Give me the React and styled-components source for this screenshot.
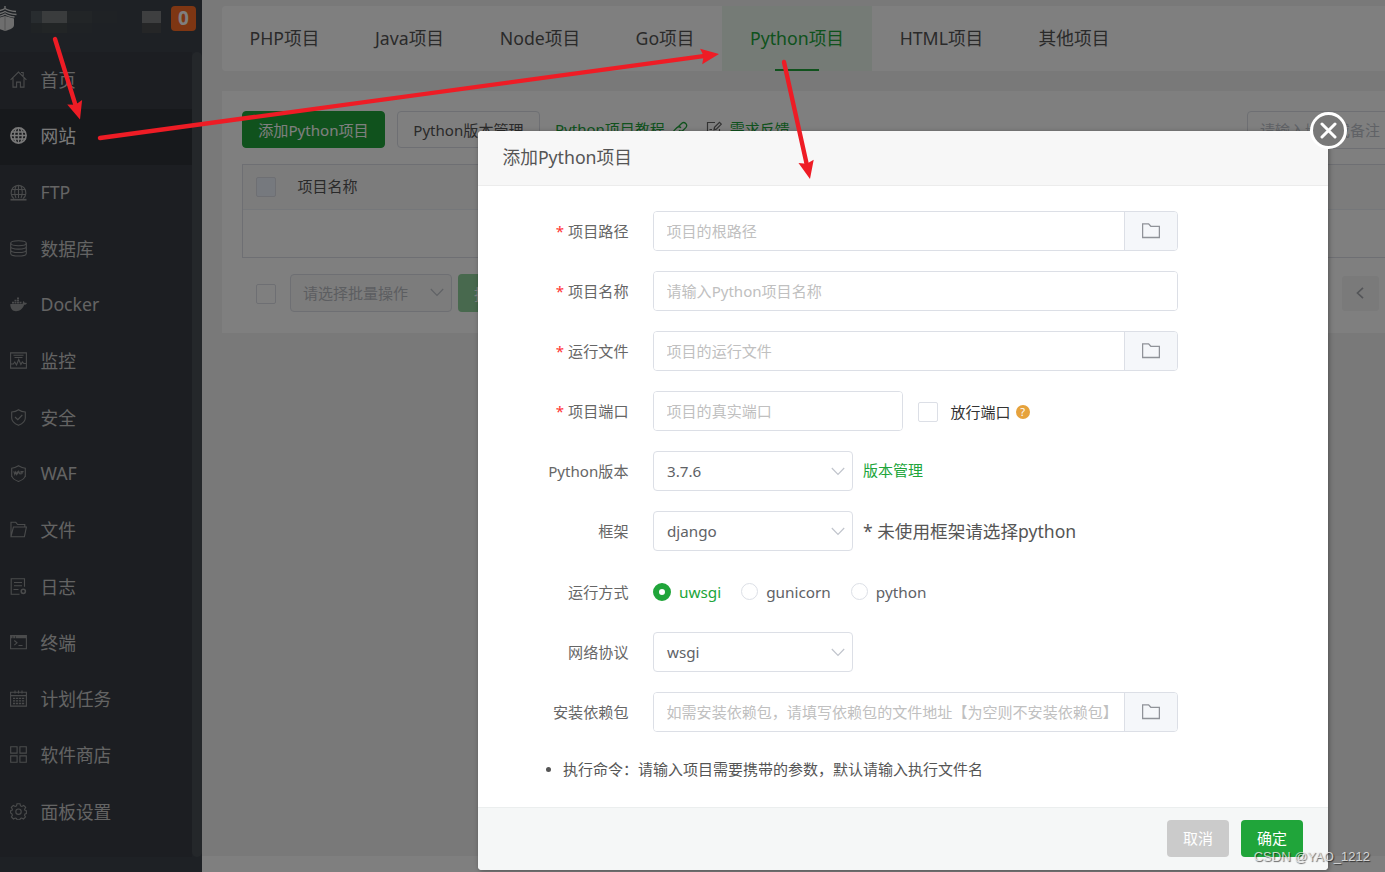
import React, { useState } from "react";
import styled, { createGlobalStyle, css } from "styled-components";

/* ========================
   1. Global Style
   ======================== */
const GlobalStyle = createGlobalStyle`
  *, *::before, *::after {
    margin: 0;
    padding: 0;
    box-sizing: border-box;
  }
  body {
    font-family: "Noto Sans", "Noto Sans CJK SC", sans-serif;
    font-size: 15px;
    color: #666;
    background: #f2f2f2;
    overflow: hidden;
  }
  input, button {
    font-family: inherit;
  }
  ul {
    list-style: none;
  }
`;

/* ========================
   2. Page + Sidebar
   ======================== */
const Page = styled.div`
  position: relative;
  display: flex;
  width: 1385px;
  height: 872px;
  overflow: hidden;
`;
const Sidebar = styled.aside`
  width: 202px;
  flex-shrink: 0;
  display: flex;
  flex-direction: column;
  background: #3c434a;
`;
const SidebarHeader = styled.div`
  height: 52px;
  display: flex;
  align-items: flex-start;
  padding-top: 6px;
`;
const HostMask = styled.div`
  display: grid;
  grid-template-columns: 11px 25px 25px 25px;
  grid-template-rows: 12px 10px;
  margin: 5px 25px 0 14px;
`;
const StateMask = styled.div`
  display: grid;
  grid-template-columns: 19px;
  grid-template-rows: 12px 10px;
  margin: 5px 10px 0 0;
`;
const MaskCell = styled.i`
  background: ${(props) => props.$tone};
`;
const MessageBadge = styled.div`
  width: 25px;
  height: 25px;
  border-radius: 4px;
  background: #fc6d26;
  color: #fff;
  font-size: 19px;
  font-weight: 700;
  line-height: 24px;
  text-align: center;
`;
const MenuWrap = styled.div`
  height: 805px;
  display: flex;
`;
const Menu = styled.ul`
  width: 192px;
  background: #383d44;
  padding-top: 1px;
  display: flex;
  flex-direction: column;
  gap: 1px;
`;
const ScrollTrack = styled.div`
  flex: 1;
  border-radius: 5px;
  background: #494e55;
`;
const MenuItem = styled.li`
  height: 55.27px;
  display: flex;
  align-items: center;
  padding: 0 0 3px 10px;
  gap: 13.5px;
  font-size: 17.7px;
  color: #c8c8c8;
  svg {
    width: 17px;
    height: 17px;
    margin-top: 1px;
    color: #949698;
  }
  ${(props) =>
    props.$active &&
    css`
      background: #2f3238;
      color: #f4f4f4;
      svg {
        color: #f0f0f0;
      }
    `}
`;

/* ========================
   3. Main Content
   ======================== */
const Main = styled.main`
  flex: 1;
  min-width: 0;
  display: flex;
  flex-direction: column;
`;
const Content = styled.div`
  height: 856px;
  padding: 6px 0 0 20px;
`;
const Tabs = styled.nav`
  height: 65px;
  display: flex;
  background: #fff;
  border-radius: 4px 0 0 4px;
`;
const Tab = styled.a`
  width: ${(props) => props.$width}px;
  height: 65px;
  padding-top: 1px;
  display: flex;
  flex-direction: column;
  align-items: center;
  font-size: 17.7px;
  line-height: 62px;
  color: #555;
  white-space: nowrap;
  ${(props) =>
    props.$active &&
    css`
      background: #eaf6ec;
      color: #20a53a;
      &::after {
        content: "";
        width: 44px;
        height: 2px;
        background: #20a53a;
      }
    `}
`;
const Panel = styled.section`
  height: 242px;
  margin-top: 20px;
  padding: 20px 0 0 20px;
  background: #fff;
`;
const Toolbar = styled.div`
  display: flex;
  align-items: center;
  height: 37px;
`;
const ToolButton = styled.button`
  width: 143px;
  height: 37px;
  margin-right: 12px;
  padding-bottom: 2px;
  border: 1px solid ${(props) => (props.$primary ? "#20a53a" : "#dcdfe6")};
  border-radius: 4px;
  background: ${(props) => (props.$primary ? "#20a53a" : "#fff")};
  color: ${(props) => (props.$primary ? "#fff" : "#555")};
  font-size: 15.1px;
  white-space: nowrap;
`;
const ToolLink = styled.a`
  display: flex;
  align-items: center;
  gap: 7.5px;
  margin: 0 15px 0 3px;
  padding-bottom: 2px;
  color: #20a53a;
  svg {
    width: 16px;
    height: 16px;
  }
`;
const FeedbackIcon = styled.span`
  display: flex;
  color: #666;
`;
const Search = styled.div`
  width: 240px;
  height: 38px;
  margin-left: auto;
  margin-right: -102px;
  padding-left: 12px;
  border: 1px solid #dcdfe6;
  border-radius: 4px;
  color: #c0c4cc;
  line-height: 36px;
`;
const Table = styled.div`
  height: 94px;
  margin-top: 16px;
  border: 1px solid #dcdfe6;
  border-right: 0;
`;
const TableHead = styled.div`
  height: 45px;
  display: flex;
  align-items: center;
  padding-left: 13px;
  gap: 21.5px;
  background: #f8f8f8;
  border-bottom: 1px solid #ebeef5;
  color: #555;
`;
const HeadCell = styled.span`
  padding-bottom: 3px;
`;
const CheckBox = styled.span`
  width: 20px;
  height: 20px;
  flex-shrink: 0;
  border: 1px solid #dcdfe6;
  border-radius: 2px;
  background: ${(props) => (props.$disabled ? "#edf2fc" : "#fff")};
`;
const BatchBar = styled.div`
  display: flex;
  align-items: center;
  height: 38px;
  margin-top: 16px;
  padding: 0 6px 0 14px;
  & > ${CheckBox} {
    margin-top: 2px;
  }
`;
const BatchSelect = styled.div`
  width: 162px;
  height: 38px;
  margin: 0 6px 0 14px;
  padding: 0 7px 2px 12px;
  display: flex;
  align-items: center;
  justify-content: space-between;
  border: 1px solid #dcdfe6;
  border-radius: 4px;
  background: #f8f8f8;
  color: #b8bcc2;
`;
const BatchButton = styled.button`
  width: 90px;
  height: 38px;
  padding-left: 16px;
  border: 0;
  border-radius: 4px;
  background: #90d29d;
  color: #fff;
  font-size: 15px;
  text-align: left;
`;
const PrevPage = styled.button`
  width: 37px;
  height: 35px;
  margin-left: auto;
  padding-right: 2px;
  display: flex;
  align-items: center;
  justify-content: center;
  border: 0;
  border-radius: 3px;
  background: #f4f4f5;
  color: #a8abb0;
`;
const PageFooter = styled.footer`
  flex: 1;
  background: #fff;
`;

/* ========================
   4. Dialog
   ======================== */
const Shade = styled.div`
  position: absolute;
  inset: 0;
  background: rgba(0, 0, 0, 0.5);
`;
const Dialog = styled.div`
  position: absolute;
  left: 478px;
  top: 131px;
  width: 850px;
  height: 739px;
  display: flex;
  flex-direction: column;
  border-radius: 4px;
  background: #fff;
  box-shadow: 1px 1px 5px rgba(0, 0, 0, 0.35);
`;
const DialogTitle = styled.h3`
  height: 55px;
  padding-left: 24.5px;
  border-bottom: 1px solid #ececec;
  border-radius: 4px 4px 0 0;
  background: #f7f7f7;
  color: #555;
  font-size: 17.7px;
  font-weight: 400;
  line-height: 53px;
`;
const CloseButton = styled.button`
  position: absolute;
  top: -19px;
  right: -19px;
  width: 37px;
  height: 37px;
  display: flex;
  align-items: center;
  justify-content: center;
  border: 3.5px solid #fff;
  border-radius: 50%;
  background: #787878;
  color: #fff;
`;
const Form = styled.div`
  flex: 1;
  padding-top: 25px;
`;
const Row = styled.div`
  display: flex;
  align-items: center;
  height: ${(props) => props.$height || 40}px;
  margin-bottom: 20px;
`;
const Label = styled.label`
  width: 150.5px;
  margin-right: 24.5px;
  padding-bottom: 2px;
  text-align: right;
  font-size: 15.1px;
  white-space: nowrap;
  ${(props) =>
    props.$required &&
    css`
      &::before {
        content: "*";
        margin-right: 4px;
        color: #f33;
      }
    `}
`;
const InputGroup = styled.div`
  width: ${(props) => props.$width || 525}px;
  height: 40px;
  display: flex;
  overflow: hidden;
  border: 1px solid #dcdfe6;
  border-radius: 4px;
`;
const Input = styled.input`
  flex: 1;
  min-width: 0;
  padding: 0 0 1px 12.5px;
  border: 0;
  outline: 0;
  background: #fff;
  font-size: 15.05px;
  &::placeholder {
    color: #c0c0c0;
    opacity: 1;
  }
`;
const FolderAddon = styled.div`
  width: 53px;
  display: flex;
  align-items: center;
  justify-content: center;
  border-left: 1px solid #dcdfe6;
  background: #f5f7fa;
  color: #909399;
`;
const SelectBox = styled.div`
  width: 200px;
  height: 40px;
  display: flex;
  align-items: center;
  justify-content: space-between;
  padding: 0 7px 0 13px;
  border: 1px solid #dcdfe6;
  border-radius: 4px;
  color: #606266;
  font-size: 15.2px;
`;
const ReleasePort = styled.div`
  display: flex;
  align-items: center;
  margin-left: 15px;
  padding-top: 2px;
  color: #333;
`;
const PortText = styled.span`
  margin-left: 12.5px;
  padding-bottom: 2px;
`;
const HelpMark = styled.i`
  width: 14px;
  height: 14px;
  margin-left: 5px;
  border-radius: 50%;
  background: #e6a23c;
  color: #fff;
  font-size: 11px;
  font-style: normal;
  line-height: 14px;
  text-align: center;
`;
const VersionLink = styled.a`
  margin-left: 10px;
  padding-bottom: 4px;
  color: #20a53a;
`;
const FrameTip = styled.span`
  margin-left: 10px;
  padding-bottom: 2px;
  color: #555;
  font-size: 17.6px;
`;
const Radio = styled.div`
  display: flex;
  align-items: center;
  gap: 8px;
  margin-right: 20px;
  font-size: 15.3px;
  color: ${(props) => (props.$checked ? "#20a53a" : "#606266")};
  &::before {
    content: "";
    width: ${(props) => (props.$checked ? 18 : 17)}px;
    height: ${(props) => (props.$checked ? 18 : 17)}px;
    border: ${(props) =>
      props.$checked ? "6px solid #20a53a" : "1px solid #dcdfe6"};
    border-radius: 50%;
    background: #fff;
  }
`;
const Tips = styled.ul`
  padding: 7px 0 0 85px;
  color: #555;
  li {
    display: flex;
    align-items: center;
    line-height: 20px;
  }
  li::before {
    content: "";
    width: 5px;
    height: 5px;
    margin: 1px 12px 0 -17px;
    border-radius: 50%;
    background: #555;
  }
`;
const DialogFooter = styled.div`
  height: 63px;
  display: flex;
  align-items: center;
  justify-content: flex-end;
  gap: 12px;
  padding: 0 25px 1px 0;
  border-top: 1px solid #ebeeee;
  border-radius: 0 0 4px 4px;
  background: #f5f7f7;
`;
const DialogButton = styled.button`
  width: 62px;
  height: 37px;
  padding-bottom: 2px;
  border: 0;
  border-radius: 4px;
  background: ${(props) => (props.$primary ? "#20a53a" : "#cbcbcb")};
  color: #fff;
  font-size: 15px;
`;

/* ========================
   5. Annotations
   ======================== */
const ArrowLayer = styled.svg`
  position: absolute;
  inset: 0;
  pointer-events: none;
`;
const Watermark = styled.div`
  position: absolute;
  right: 15px;
  bottom: 7px;
  color: rgba(240, 240, 240, 0.8);
  font-family: "Liberation Sans", sans-serif;
  font-size: 13px;
  line-height: 16px;
  text-shadow: 1px 1px 1px rgba(0, 0, 0, 0.6);
`;

/* ========================
   6. Icons
   ======================== */
const Icon = ({ children }) => (
  <svg
    viewBox="0 0 17 17"
    fill="none"
    stroke="currentColor"
    strokeWidth="1.1"
  >
    {children}
  </svg>
);

const HomeIcon = () => (
  <Icon>
    <path d="M.6 8.8 8.5 1l7.9 7.8M3 7.2v8.9h3.6v-5h3.8v5H14V7.2M11 1.5h2.2V5" />
  </Icon>
);
const GlobeIcon = () => (
  <Icon>
    <circle cx="8.5" cy="8.5" r="7.6" strokeWidth="1.6" />
    <path
      d="M8.5.7v15.6M1.6 5h13.8M1.6 12h13.800M.7 8.5h15.6M6.500 1C4 5.500 4 11.500 6.500 16M10.500 1c2.500 4.500 2.500 10.500 0 15"
      strokeWidth="1.4"
    />
  </Icon>
);
const FtpIcon = () => (
  <Icon>
    <path d="M4 14.6a7.4 7.4 0 1 1 9 0M8.5 1v13M1.4 5.500h14.2M1.4 10.500h14.2M6.500 1.300C4.500 5 4.500 10.500 6 14M10.500 1.300c2 3.700 2 9.200.5 12.700" />
    <path d="M.5 15.7h16" strokeWidth="1.7" />
  </Icon>
);
const DatabaseIcon = () => (
  <Icon>
    <ellipse cx="8.5" cy="3.2" rx="7.8" ry="2.5" />
    <path d="M.7 3.2v10.3c0 3.4 15.6 3.4 15.6 0V3.2M.7 6.6c0 3.4 15.6 3.4 15.6 0M.7 10c0 3.4 15.6 3.4 15.6 0" />
  </Icon>
);
const DockerIcon = () => (
  <Icon>
    <path
      d="M.3 8h12.200c.4-1.200.3-2 .7-3 .9.500 1.300 1.100 1.500 1.900.9-.2 1.600-.1 2.200.4-.5 1-1.500 1.500-2.700 1.500-1.600 4.100-4.200 6.400-8.200 6.400C2.500 15.200.2 12.700.3 8Z"
      fill="currentColor"
      stroke="none"
    />
    <path
      d="M2 6.7h2M4.5 6.7h2M7 6.7h2M9.5 6.7h2M4.5 4.5h2M7 4.5h2M7 2.3h2"
      strokeWidth="1.7"
    />
  </Icon>
);
const MonitorIcon = () => (
  <Icon>
    <path d="M.6.9h15.8v15.2H.6zM3.5 3.3h10M4.500 5.5h8M.8 12h2.500l1.500-2 1.700 3 2.200-5.500 2.200 5 1.400-2.500 1.500 1.500h2.400" />
  </Icon>
);
const ShieldIcon = () => (
  <Icon>
    <path d="M8.5.7c2.2 1.6 4.4 2.2 6.8 2.3v6c0 3.2-2.6 5.6-6.8 7.3C4.3 14.6 1.7 12.2 1.7 9V3C4.1 2.9 6.3 2.3 8.5.7ZM5 8l2.8 2.7L12.3 6" />
  </Icon>
);
const WafIcon = () => (
  <Icon>
    <path d="M1.7 5V3.3C4.1 3 6.3 2 8.5.7c2.2 1.3 4.4 2.3 6.8 2.6V5M1.7 10.5c.5 2.6 2.7 4.5 6.8 5.9 4.1-1.4 6.3-3.3 6.8-5.9M1.7 4v8M15.3 4v8" />
    <path
      d="m3.8 6.3 1 3 .9-2.3.9 2.3 1-3M7.4 9.3l1.3-3 1.3 3M11 9.500V6.600h2.600M11 8h2"
      strokeWidth="1.1"
    />
  </Icon>
);
const OpenFolderIcon = () => (
  <Icon>
    <path d="M1 15.7V1.3h4.8l1.8 2.2h7.2v2.3M1 15.7 3.4 6h13l-2 9.7Z" />
  </Icon>
);
const LogIcon = () => (
  <Icon>
    <path d="M9.5 16.3H1.2V.8h13.3v8M4 4.5h8M4 7.8h8M3.5 11.5h5" />
    <circle cx="13.3" cy="13.3" r="2.1" strokeWidth="1.5" />
  </Icon>
);
const TerminalIcon = () => (
  <Icon>
    <path d="M.6 1.6h15.8v13.2H.6zM4.3 6.5 7 8.8l-2.7 2.3M8.5 11.5h4" />
    <path d="M.6 3h15.8" strokeWidth="2.4" strokeDasharray="2 .6 2 .6 20" />
  </Icon>
);
const CalendarIcon = () => (
  <Icon>
    <path d="M.6 2.2h15.8v13.9H.6zM.6 5.6h15.8M5 .5v3M12 .5v3M8.5.5v3" />
    <path
      d="M3 8.3h11.5M3 10.9h11.5M3 13.5h11.5"
      strokeWidth="1.3"
      strokeDasharray="2.2 .8"
    />
  </Icon>
);
const AppsIcon = () => (
  <Icon>
    <path d="M.7.7h6.400v6.400H.7zM9.900.7h6.400v6.400H9.900zM.7 9.900h6.400v6.400H.7zM9.900 9.900h6.400v6.400H9.900z" />
  </Icon>
);
const GearIcon = () => (
  <Icon>
    <path d="M7 .8h3l.5 2.100 1.300.6 1.900-1.100 2 2-1.100 1.900.5 1.200 1.300.3v2.700l-1.400.4-.5 1.300 1 1.800-2 2-1.800-1-1.300.5-.5 1.200H7l-.5-1.200-1.300-.5-1.800 1-2-2 1-1.800-.5-1.300L.6 10V7.800l1.300-.3.5-1.200-1.100-1.900 2-2 1.900 1.100 1.300-.6Z" />
    <circle cx="8.5" cy="8.7" r="2.7" />
  </Icon>
);

const LogoIcon = () => (
  <svg width="17" height="26" viewBox="0 0 17 26" fill="none">
    <path
      d="M5 0v3M-6 5.500C-1 5 3 4 5 2.500c2 1.500 6 2.500 11 3M-6 8.500c5-.5 9-1.500 11-3 2 1.500 6 2.500 11.500 3M-5 11c4-.5 8-1.500 10-3 2 1.500 5 2.500 9.500 3"
      stroke="#dcdcdc"
      strokeWidth="1.400"
    />
    <path d="M-4 12.500 5 10l9 2.500V19c0 3-3.500 4.500-9 6-5.500-1.500-9-3-9-6Z" fill="#dcdcdc" />
    <path d="M5 10v15" stroke="#a8a8a8" />
  </svg>
);
const ChevronDown = () => (
  <svg width="14" height="9" viewBox="0 0 14 9" fill="none">
    <path d="m.8 1 6.2 6.3L13.2 1" stroke="#c0c4cc" strokeWidth="1.2" />
  </svg>
);
const FolderIcon = () => (
  <svg width="18" height="16" viewBox="0 0 18 16" fill="none">
    <path
      d="M.6.8h6l2.200 2.500h8.600v11.200H.6Z"
      stroke="currentColor"
      strokeWidth="1.3"
    />
  </svg>
);
const LinkIcon = () => (
  <svg viewBox="0 0 16 16" fill="none" stroke="currentColor" strokeWidth="1.3">
    <path d="m6.500 5.500 3.300-3.300a3 3 0 0 1 4.200 4.200l-2.800 2.800a3 3 0 0 1-4.200 0M9.500 10.500l-3.300 3.300A3 3 0 0 1 2 9.600l2.800-2.800a3 3 0 0 1 4.200 0" />
  </svg>
);
const EditIcon = () => (
  <svg viewBox="0 0 16 16" fill="none" stroke="currentColor" strokeWidth="1.2">
    <path d="M9 1.500H1.500v13h12V8M3.500 8.500H6M8 8.700l.5-2.300 5-5 1.800 1.800-5 5Z" />
  </svg>
);

/* ========================
   7. Data
   ======================== */
const menuItems = [
  { name: "首页", icon: HomeIcon },
  { name: "网站", icon: GlobeIcon },
  { name: "FTP", icon: FtpIcon },
  { name: "数据库", icon: DatabaseIcon },
  { name: "Docker", icon: DockerIcon },
  { name: "监控", icon: MonitorIcon },
  { name: "安全", icon: ShieldIcon },
  { name: "WAF", icon: WafIcon },
  { name: "文件", icon: OpenFolderIcon },
  { name: "日志", icon: LogIcon },
  { name: "终端", icon: TerminalIcon },
  { name: "计划任务", icon: CalendarIcon },
  { name: "软件商店", icon: AppsIcon },
  { name: "面板设置", icon: GearIcon },
];

const tabs = [
  { name: "PHP项目", width: 125 },
  { name: "Java项目", width: 125 },
  { name: "Node项目", width: 136 },
  { name: "Go项目", width: 114 },
  { name: "Python项目", width: 150 },
  { name: "HTML项目", width: 139 },
  { name: "其他项目", width: 126 },
];

const hostTones = [
  "#50585e", "#74787a", "#444a4e", "#3f454a",
  "#40474a", "#454a4c", "#3e444a", "#3c434a",
];

const arrows = [
  { from: [55, 39], to: [80, 119.5] },
  { from: [100, 138], to: [719, 54] },
  { from: [784, 62], to: [810, 179] },
];

const Arrow = ({ from, to }) => {
  const length = Math.hypot(to[0] - from[0], to[1] - from[1]);
  const angle =
    (Math.atan2(to[1] - from[1], to[0] - from[0]) * 180) / Math.PI;

  return (
    <g transform={`translate(${to[0]} ${to[1]}) rotate(${angle})`}>
      <path
        d={`M${-length} 0H-12`}
        stroke="#ee1c25"
        strokeWidth="4.4"
        strokeLinecap="round"
      />
      <path d="M0 0 -18 -7.8 -15.5 0 -18 7.8Z" fill="#ee1c25" />
    </g>
  );
};

/* ========================
   8. App
   ======================== */
const App = () => {
  const [activeTab, setActiveTab] = useState("Python项目");
  const [runType, setRunType] = useState("uwsgi");

  return (
    <>
      <GlobalStyle />
      <Page>
        <Sidebar>
          <SidebarHeader>
            <LogoIcon />
            <HostMask>
              {hostTones.map((tone, index) => (
                <MaskCell key={index} $tone={tone} />
              ))}
            </HostMask>
            <StateMask>
              <MaskCell $tone="#7c7e80" />
              <MaskCell $tone="#4a4d4e" />
            </StateMask>
            <MessageBadge>0</MessageBadge>
          </SidebarHeader>
          <MenuWrap>
            <Menu>
              {menuItems.map((item) => (
                <MenuItem key={item.name} $active={item.name === "网站"}>
                  <item.icon />
                  {item.name}
                </MenuItem>
              ))}
            </Menu>
            <ScrollTrack />
          </MenuWrap>
        </Sidebar>

        <Main>
          <Content>
            <Tabs>
              {tabs.map((tab) => (
                <Tab
                  key={tab.name}
                  $width={tab.width}
                  $active={tab.name === activeTab}
                  onClick={() => setActiveTab(tab.name)}
                >
                  {tab.name}
                </Tab>
              ))}
            </Tabs>

            <Panel>
              <Toolbar>
                <ToolButton $primary>添加Python项目</ToolButton>
                <ToolButton>Python版本管理</ToolButton>
                <ToolLink>
                  Python项目教程
                  <LinkIcon />
                </ToolLink>
                <ToolLink>
                  <FeedbackIcon>
                    <EditIcon />
                  </FeedbackIcon>
                  需求反馈
                </ToolLink>
                <Search>请输入域名或备注</Search>
              </Toolbar>

              <Table>
                <TableHead>
                  <CheckBox $disabled />
                  <HeadCell>项目名称</HeadCell>
                </TableHead>
              </Table>

              <BatchBar>
                <CheckBox />
                <BatchSelect>
                  请选择批量操作
                  <ChevronDown />
                </BatchSelect>
                <BatchButton>批量操作</BatchButton>
                <PrevPage>
                  <svg width="8" height="12" viewBox="0 0 8 12" fill="none">
                    <path d="M7 .8 1.5 6 7 11.2" stroke="currentColor" strokeWidth="1.7" />
                  </svg>
                </PrevPage>
              </BatchBar>
            </Panel>
          </Content>
          <PageFooter />
        </Main>

        <Shade />

        <Dialog>
          <DialogTitle>添加Python项目</DialogTitle>
          <CloseButton>
            <svg width="17" height="17" viewBox="0 0 17 17">
              <path
                d="m2 2 13 13M15 2 2 15"
                stroke="currentColor"
                strokeWidth="3"
                strokeLinecap="round"
              />
            </svg>
          </CloseButton>

          <Form>
            <Row>
              <Label $required>项目路径</Label>
              <InputGroup>
                <Input placeholder="项目的根路径" />
                <FolderAddon>
                  <FolderIcon />
                </FolderAddon>
              </InputGroup>
            </Row>
            <Row>
              <Label $required>项目名称</Label>
              <InputGroup>
                <Input placeholder="请输入Python项目名称" />
              </InputGroup>
            </Row>
            <Row>
              <Label $required>运行文件</Label>
              <InputGroup>
                <Input placeholder="项目的运行文件" />
                <FolderAddon>
                  <FolderIcon />
                </FolderAddon>
              </InputGroup>
            </Row>
            <Row>
              <Label $required>项目端口</Label>
              <InputGroup $width={250}>
                <Input placeholder="项目的真实端口" />
              </InputGroup>
              <ReleasePort>
                <CheckBox />
                <PortText>放行端口</PortText>
                <HelpMark>?</HelpMark>
              </ReleasePort>
            </Row>
            <Row>
              <Label>Python版本</Label>
              <SelectBox>
                3.7.6
                <ChevronDown />
              </SelectBox>
              <VersionLink>版本管理</VersionLink>
            </Row>
            <Row>
              <Label>框架</Label>
              <SelectBox>
                django
                <ChevronDown />
              </SelectBox>
              <FrameTip>* 未使用框架请选择python</FrameTip>
            </Row>
            <Row $height={41}>
              <Label>运行方式</Label>
              {["uwsgi", "gunicorn", "python"].map((type) => (
                <Radio
                  key={type}
                  $checked={type === runType}
                  onClick={() => setRunType(type)}
                >
                  {type}
                </Radio>
              ))}
            </Row>
            <Row>
              <Label>网络协议</Label>
              <SelectBox>
                wsgi
                <ChevronDown />
              </SelectBox>
            </Row>
            <Row>
              <Label>安装依赖包</Label>
              <InputGroup>
                <Input placeholder="如需安装依赖包，请填写依赖包的文件地址【为空则不安装依赖包】" />
                <FolderAddon>
                  <FolderIcon />
                </FolderAddon>
              </InputGroup>
            </Row>
            <Tips>
              <li>执行命令：请输入项目需要携带的参数，默认请输入执行文件名</li>
            </Tips>
          </Form>

          <DialogFooter>
            <DialogButton>取消</DialogButton>
            <DialogButton $primary>确定</DialogButton>
          </DialogFooter>
        </Dialog>

        <ArrowLayer width="1385" height="872">
          {arrows.map((arrow) => (
            <Arrow key={arrow.from.join()} {...arrow} />
          ))}
        </ArrowLayer>
        <Watermark>CSDN @YAO_1212</Watermark>
      </Page>
    </>
  );
};

export default App;
